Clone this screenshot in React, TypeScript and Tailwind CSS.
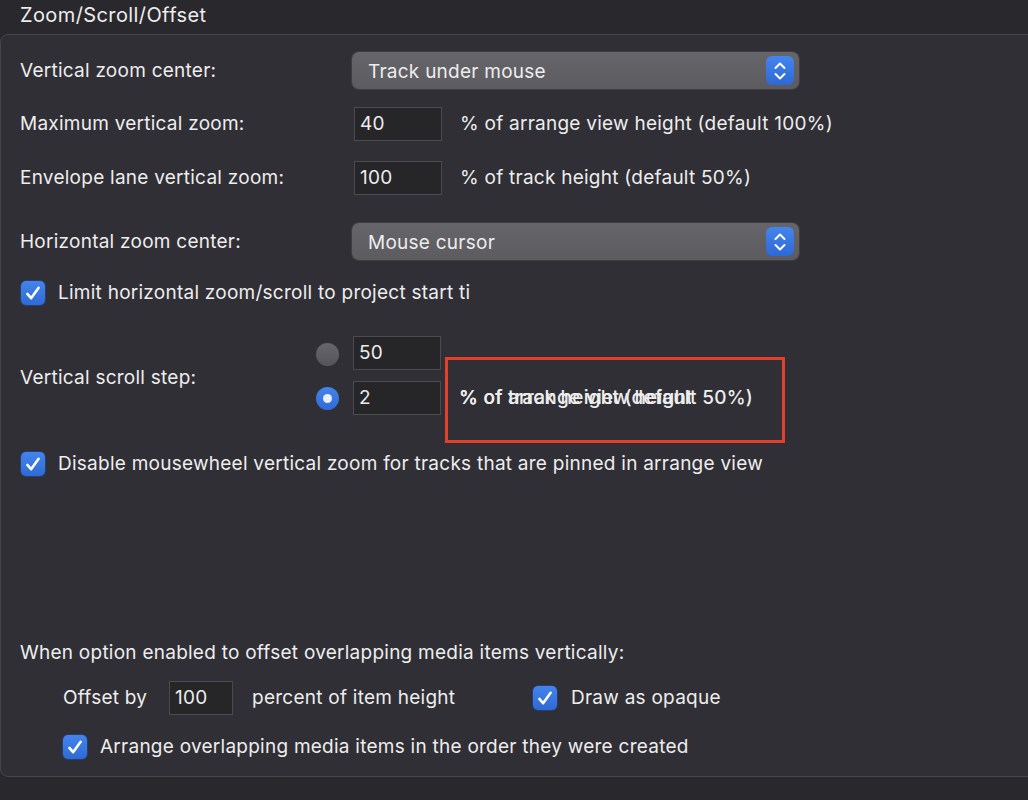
import type { ReactNode } from "react";

const font = { fontFamily: "Inter, 'Liberation Sans', sans-serif" };

function Check() {
  return (
    <span className="flex h-6 w-6 shrink-0 items-center justify-center rounded-[5px] bg-gradient-to-b from-[#4484ec] to-[#2f6ad6] shadow-[0_0_0_0.5px_#1f4fa8]">
      <svg width="18" height="18" viewBox="0 0 16 16" fill="none">
        <path
          d="M3 8.8 L6.3 12.6 L13 3.4"
          stroke="white"
          strokeWidth="2.3"
          strokeLinecap="round"
          strokeLinejoin="round"
        />
      </svg>
    </span>
  );
}

function Radio({ on }: { on?: boolean }) {
  if (on)
    return (
      <span className="flex h-[23px] w-[23px] items-center justify-center rounded-full bg-gradient-to-b from-[#4484ec] to-[#2f6ad6]">
        <span className="h-[9px] w-[9px] rounded-full bg-[#e8eefc]" />
      </span>
    );
  return (
    <span className="h-[23px] w-[23px] rounded-full bg-gradient-to-b from-[#67666b] to-[#55545a]" />
  );
}

function Field({ value, w = "w-[88px]" }: { value: string; w?: string }) {
  return (
    <div
      className={`${w} flex h-[34px] shrink-0 items-center border border-[#4b4a50] bg-[#262528] px-[5px] text-[#ececec]`}
    >
      {value}
    </div>
  );
}

function Popup({ label }: { label: string }) {
  return (
    <div className="flex h-[37px] w-[447px] items-center justify-between rounded-[7px] bg-gradient-to-b from-[#66656a] to-[#5c5b60] pl-4 pr-[5px] shadow-[0_0_0_1px_#3f3e44]">
      <span className="pt-[2px]">{label}</span>
      <span className="flex h-[29px] w-[28px] flex-col items-center justify-center rounded-[6px] bg-gradient-to-b from-[#4485ee] to-[#2e68d4]">
        <svg width="14" height="22" viewBox="0 0 14 22" fill="none">
          <path
            d="M2.5 8 L7 3.5 L11.5 8 M2.5 14 L7 18.5 L11.5 14"
            stroke="white"
            strokeWidth="2"
            strokeLinecap="round"
            strokeLinejoin="round"
          />
        </svg>
      </span>
    </div>
  );
}

function Row({ label, children, h }: { label: string; children: ReactNode; h: string }) {
  return (
    <div className={`flex ${h} items-center`}>
      <span className="w-[332px] shrink-0">{label}</span>
      {children}
    </div>
  );
}

export default function App() {
  return (
    <div
      className="h-[800px] w-[1028px] overflow-hidden bg-[#29282d] text-[19px] leading-6 tracking-[0.25px] text-[#ededed]"
      style={font}
    >
      <div className="flex h-[34px] items-center pl-5 pb-[4px] text-[20px] tracking-[0.4px]">
        Zoom/Scroll/Offset
      </div>
      <div className="w-[1060px] rounded-[8px] border border-[#46454b] bg-[#302f35] pb-[17px] pl-[19px] pt-[17px]">
        <Row label="Vertical zoom center:" h="h-[37px]">
          <Popup label="Track under mouse" />
        </Row>
        <div className="mt-[18px]">
          <Row label="Maximum vertical zoom:" h="h-[34px]">
            <span className="ml-[2px]">
              <Field value="40" />
            </span>
            <span className="ml-[18px]">% of arrange view height (default 100%)</span>
          </Row>
        </div>
        <div className="mt-[20px]">
          <Row label="Envelope lane vertical zoom:" h="h-[34px]">
            <span className="ml-[2px]">
              <Field value="100" />
            </span>
            <span className="ml-[18px]">% of track height (default 50%)</span>
          </Row>
        </div>
        <div className="mt-[28px]">
          <Row label="Horizontal zoom center:" h="h-[37px]">
            <Popup label="Mouse cursor" />
          </Row>
        </div>
        <div className="mt-[21px] flex h-6 items-center gap-[13px] pl-[1px]">
          <Check />
          <span>Limit horizontal zoom/scroll to project start ti</span>
        </div>

        <div className="mt-[31px] flex items-center">
          <span className="w-[296px] shrink-0 pt-[5px]">Vertical scroll step:</span>
          <div className="flex flex-col gap-[11px]">
            <div className="flex h-[34px] items-center">
              <span className="flex w-[37px] justify-start pt-[2px]">
                <Radio />
              </span>
              <Field value="50" />
            </div>
            <div className="flex h-[34px] items-center">
              <span className="flex w-[37px] justify-start">
                <Radio on />
              </span>
              <Field value="2" />
              <span className="relative ml-[18px] font-medium">
                <span className="invisible">% of track height (default 50%)</span>
                <span className="absolute left-0 top-0 whitespace-nowrap">
                  % of track height (default 50%)
                </span>
                <span className="absolute left-0 top-0 w-[232px] overflow-hidden whitespace-nowrap">
                  % of arrange view height (default 100%)
                </span>
                <span className="pointer-events-none absolute left-[-14px] top-[-29px] h-[86px] w-[340px] border-[3px] border-[#e1402c]" />
              </span>
            </div>
          </div>
        </div>

        <div className="mt-[37px] flex h-6 items-center gap-[13px] pl-[1px]">
          <Check />
          <span>Disable mousewheel vertical zoom for tracks that are pinned in arrange view</span>
        </div>

        <div className="mt-[165px] flex h-6 items-center">
          When option enabled to offset overlapping media items vertically:
        </div>
        <div className="mt-4 flex h-[34px] items-center pl-[43px]">
          <span className="w-[106px] shrink-0">Offset by</span>
          <Field value="100" w="w-[64px]" />
          <span className="ml-[19px] w-[281px] shrink-0">percent of item height</span>
          <span className="flex items-center gap-[14px]">
            <Check />
            <span>Draw as opaque</span>
          </span>
        </div>
        <div className="mt-5 flex h-6 items-center gap-[13px] pl-[43px]">
          <Check />
          <span>Arrange overlapping media items in the order they were created</span>
        </div>
      </div>
    </div>
  );
}
